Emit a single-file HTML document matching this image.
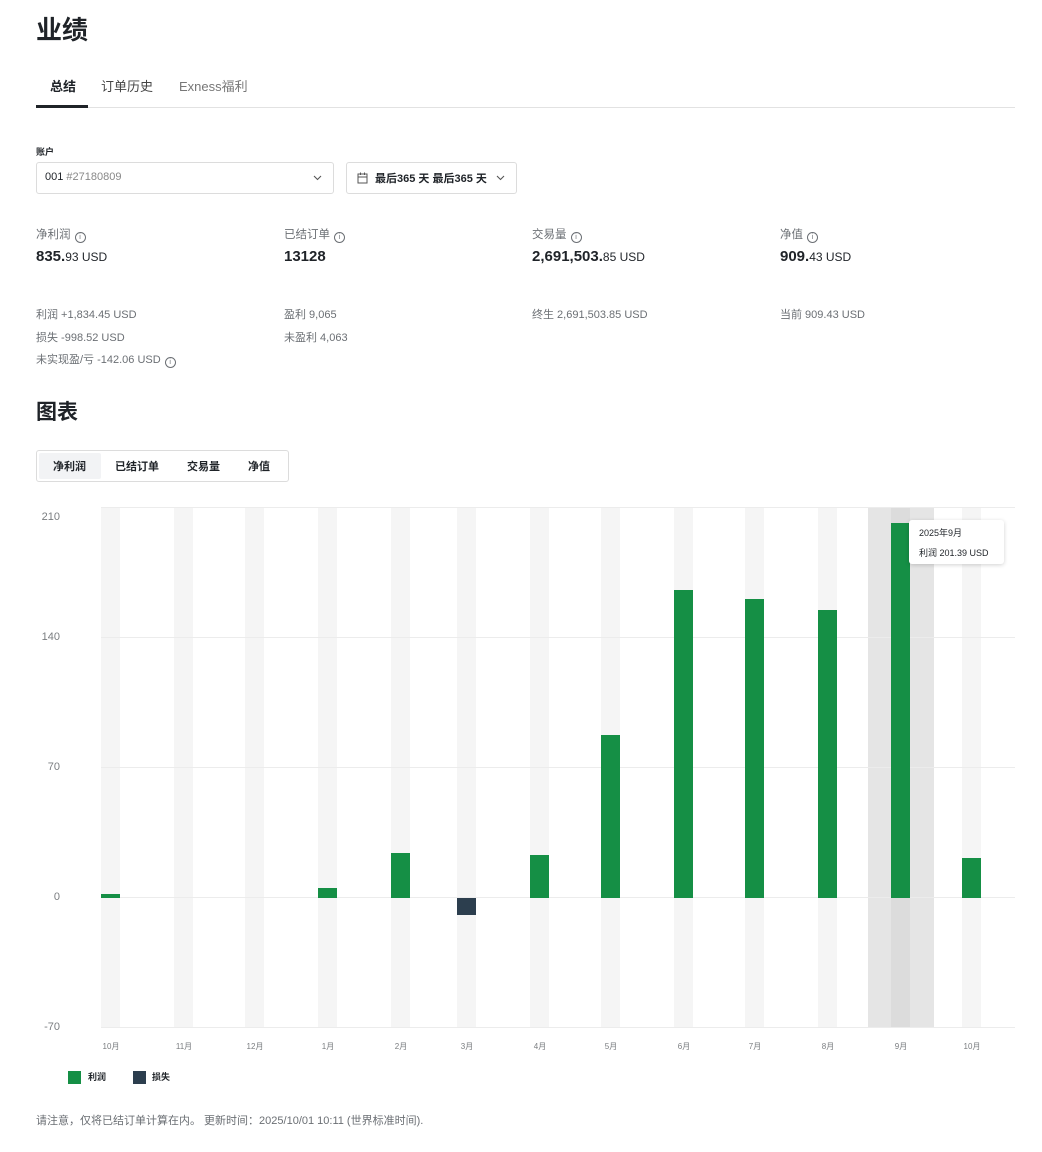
<!DOCTYPE html>
<html><head><meta charset="utf-8"><style>
*{margin:0;padding:0;box-sizing:border-box}
body{width:1042px;height:1152px;background:#fff;font-family:"Liberation Sans","Noto Sans CJK SC",sans-serif;color:#1f2328;position:relative;overflow:hidden}
.a{position:absolute;white-space:nowrap}
.g{color:#6b6f74;font-size:11px}
.info{display:inline-block;width:11px;height:11px;border:1px solid #6b6f74;border-radius:50%;font-size:7px;line-height:9px;text-align:center;vertical-align:-1px;margin-left:4px;color:#6b6f74}
.big{font-size:15px;font-weight:bold}
.big small{font-size:12px;font-weight:normal}
.st{position:absolute;top:508px;width:19px;height:520px;background:#f5f5f5}
.bar{position:absolute;width:19px;background:#158f45}
.gl{position:absolute;left:101px;width:914px;height:1px;background:#ececec}
.yl{position:absolute;left:20px;width:40px;text-align:right;font-size:11px;color:#7a7d80}
.ml{position:absolute;top:1041px;font-size:8px;color:#7a7d80;width:40px;text-align:center}
</style></head><body>
<div class="a" style="left:36px;top:10px;font-size:26px;font-weight:bold">业绩</div>
<div class="a" style="left:50px;top:76px;font-size:13px;font-weight:bold">总结</div>
<div class="a" style="left:101px;top:76px;font-size:13px;color:#444">订单历史</div>
<div class="a" style="left:179px;top:76px;font-size:13px;color:#777">Exness福利</div>
<div class="a" style="left:36px;top:107px;width:979px;height:1px;background:#e2e2e2"></div>
<div class="a" style="left:36px;top:105px;width:52px;height:3px;background:#1f2328"></div>

<div class="a" style="left:36px;top:145px;font-size:9px;font-weight:bold">账户</div>
<div class="a" style="left:36px;top:162px;width:298px;height:32px;border:1px solid #dcdcdc;border-radius:3px"></div>
<div class="a" style="left:45px;top:171px;font-size:11px">001 <span style="color:#888">#27180809</span></div>
<svg class="a" style="left:313px;top:175px" width="9" height="6" viewBox="0 0 9 6"><path d="M1 1l3.5 3.5L8 1" fill="none" stroke="#555" stroke-width="1.1"/></svg>
<div class="a" style="left:346px;top:162px;width:171px;height:32px;border:1px solid #dcdcdc;border-radius:3px"></div>
<svg class="a" style="left:357px;top:172px" width="11" height="12" viewBox="0 0 11 12"><rect x="1" y="2" width="9" height="9" fill="none" stroke="#555"/><line x1="1" y1="5" x2="10" y2="5" stroke="#555"/><line x1="3.5" y1="0.5" x2="3.5" y2="3" stroke="#555"/><line x1="7.5" y1="0.5" x2="7.5" y2="3" stroke="#555"/></svg>
<div class="a" style="left:375px;top:170px;font-size:11px;font-weight:bold">最后365 天 最后365 天</div>
<svg class="a" style="left:496px;top:175px" width="9" height="6" viewBox="0 0 9 6"><path d="M1 1l3.5 3.5L8 1" fill="none" stroke="#555" stroke-width="1.1"/></svg>

<div class="a g" style="left:36px;top:226px;font-size:11.5px">净利润<span class="info">i</span></div>
<div class="a big" style="left:36px;top:248px">835.<small>93 USD</small></div>
<div class="a g" style="left:284px;top:226px;font-size:11.5px">已结订单<span class="info">i</span></div>
<div class="a big" style="left:284px;top:248px">13128</div>
<div class="a g" style="left:532px;top:226px;font-size:11.5px">交易量<span class="info">i</span></div>
<div class="a big" style="left:532px;top:248px">2,691,503.<small>85 USD</small></div>
<div class="a g" style="left:780px;top:226px;font-size:11.5px">净值<span class="info">i</span></div>
<div class="a big" style="left:780px;top:248px">909.<small>43 USD</small></div>

<div class="a g" style="left:36px;top:306px">利润 +1,834.45 USD</div>
<div class="a g" style="left:36px;top:329px">损失 -998.52 USD</div>
<div class="a g" style="left:36px;top:351px">未实现盈/亏 -142.06 USD<span class="info">i</span></div>
<div class="a g" style="left:284px;top:306px">盈利 9,065</div>
<div class="a g" style="left:284px;top:329px">未盈利 4,063</div>
<div class="a g" style="left:532px;top:306px">终生 2,691,503.85 USD</div>
<div class="a g" style="left:780px;top:306px">当前 909.43 USD</div>

<div class="a" style="left:36px;top:396px;font-size:21px;font-weight:bold">图表</div>
<div class="a" style="left:36px;top:450px;width:253px;height:32px;border:1px solid #dcdcdc;border-radius:3px"></div>
<div class="a" style="left:39px;top:453px;width:62px;height:26px;background:#f2f3f5;border-radius:2px"></div>
<div class="a" style="left:53px;top:458px;font-size:11px;font-weight:bold">净利润</div>
<div class="a" style="left:115px;top:458px;font-size:11px;font-weight:bold">已结订单</div>
<div class="a" style="left:187px;top:458px;font-size:11px;font-weight:bold">交易量</div>
<div class="a" style="left:248px;top:458px;font-size:11px;font-weight:bold">净值</div>

<div class="a" style="left:868px;top:508px;width:66px;height:520px;background:#e5e5e5"></div>
<div class="st" style="left:101px"></div><div class="st" style="left:174px"></div><div class="st" style="left:245px"></div><div class="st" style="left:318px"></div><div class="st" style="left:391px"></div><div class="st" style="left:457px"></div><div class="st" style="left:530px"></div><div class="st" style="left:601px"></div><div class="st" style="left:674px"></div><div class="st" style="left:745px"></div><div class="st" style="left:818px"></div><div class="st" style="left:891px;background:#dcdcdc"></div><div class="st" style="left:962px"></div>
<div class="gl" style="top:507px"></div><div class="gl" style="top:637px"></div><div class="gl" style="top:767px"></div><div class="gl" style="top:897px"></div><div class="gl" style="top:1027px"></div>
<div class="yl" style="top:511px">210</div><div class="yl" style="top:631px">140</div><div class="yl" style="top:761px">70</div><div class="yl" style="top:891px">0</div><div class="yl" style="top:1021px">-70</div>

<div class="bar" style="left:101px;top:894px;height:4px"></div>
<div class="bar" style="left:318px;top:888px;height:10px"></div>
<div class="bar" style="left:391px;top:853px;height:45px"></div>
<div class="bar" style="left:457px;top:898px;height:17px;background:#2c3e4e"></div>
<div class="bar" style="left:530px;top:855px;height:43px"></div>
<div class="bar" style="left:601px;top:735px;height:163px"></div>
<div class="bar" style="left:674px;top:590px;height:308px"></div>
<div class="bar" style="left:745px;top:599px;height:299px"></div>
<div class="bar" style="left:818px;top:610px;height:288px"></div>
<div class="bar" style="left:891px;top:523px;height:375px"></div>
<div class="bar" style="left:962px;top:858px;height:40px"></div>

<div class="a" style="left:909px;top:520px;width:95px;height:44px;background:#fff;border-radius:3px;box-shadow:0 1px 4px rgba(0,0,0,.18)"></div>
<div class="a" style="left:919px;top:526px;font-size:9px">2025年9月</div>
<div class="a" style="left:919px;top:546px;font-size:9px">利润 201.39 USD</div>

<div class="ml" style="left:91px">10月</div><div class="ml" style="left:164px">11月</div><div class="ml" style="left:235px">12月</div><div class="ml" style="left:308px">1月</div><div class="ml" style="left:381px">2月</div><div class="ml" style="left:447px">3月</div><div class="ml" style="left:520px">4月</div><div class="ml" style="left:591px">5月</div><div class="ml" style="left:664px">6月</div><div class="ml" style="left:735px">7月</div><div class="ml" style="left:808px">8月</div><div class="ml" style="left:881px">9月</div><div class="ml" style="left:952px">10月</div>

<div class="a" style="left:68px;top:1071px;width:13px;height:13px;background:#158f45"></div>
<div class="a" style="left:88px;top:1070px;font-size:9px;font-weight:bold">利润</div>
<div class="a" style="left:133px;top:1071px;width:13px;height:13px;background:#2c3e4e"></div>
<div class="a" style="left:152px;top:1070px;font-size:9px;font-weight:bold">损失</div>

<div class="a g" style="left:36px;top:1112px">请注意，仅将已结订单计算在内。 更新时间：2025/10/01 10:11 (世界标准时间).</div>
</body></html>
